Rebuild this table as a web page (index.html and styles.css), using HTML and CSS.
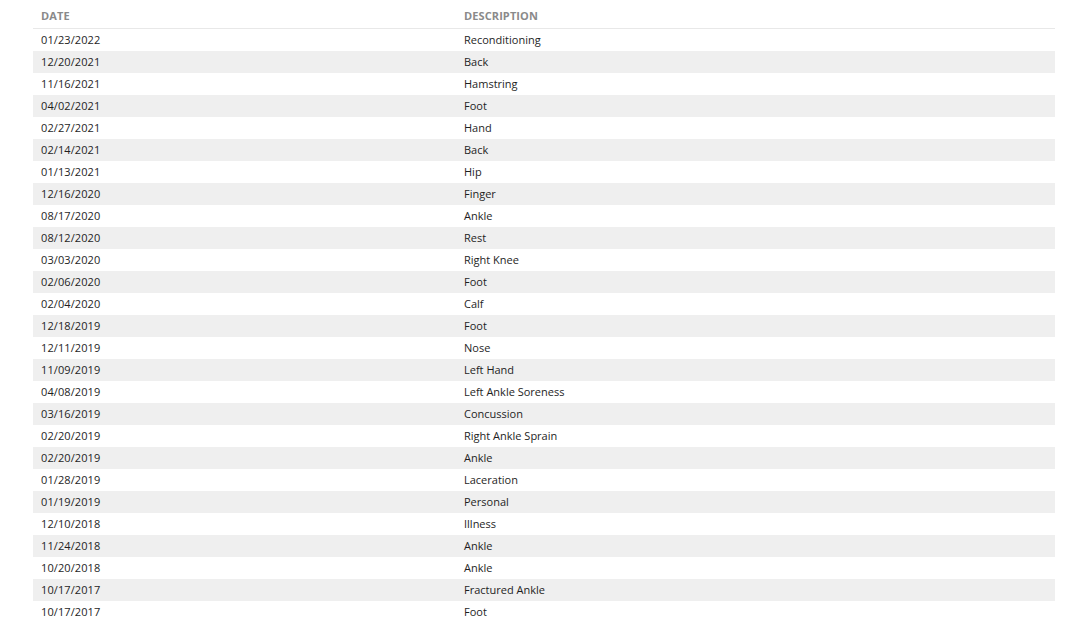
FILE: index.html
```html
<!DOCTYPE html>
<html>
<head>
<meta charset="utf-8">
<link rel="stylesheet" href="styles.css">
</head>
<body>
<div class="wrap">
<table class="log">
<thead>
<tr><th class="c-date">DATE</th><th class="c-desc">DESCRIPTION</th></tr>
</thead>
<tbody>
<tr><td class="d">01/23/2022</td><td>Reconditioning</td></tr>
<tr><td class="d">12/20/2021</td><td>Back</td></tr>
<tr><td class="d">11/16/2021</td><td>Hamstring</td></tr>
<tr><td class="d">04/02/2021</td><td>Foot</td></tr>
<tr><td class="d">02/27/2021</td><td>Hand</td></tr>
<tr><td class="d">02/14/2021</td><td>Back</td></tr>
<tr><td class="d">01/13/2021</td><td>Hip</td></tr>
<tr><td class="d">12/16/2020</td><td>Finger</td></tr>
<tr><td class="d">08/17/2020</td><td>Ankle</td></tr>
<tr><td class="d">08/12/2020</td><td>Rest</td></tr>
<tr><td class="d">03/03/2020</td><td>Right Knee</td></tr>
<tr><td class="d">02/06/2020</td><td>Foot</td></tr>
<tr><td class="d">02/04/2020</td><td>Calf</td></tr>
<tr><td class="d">12/18/2019</td><td>Foot</td></tr>
<tr><td class="d">12/11/2019</td><td>Nose</td></tr>
<tr><td class="d">11/09/2019</td><td>Left Hand</td></tr>
<tr><td class="d">04/08/2019</td><td>Left Ankle Soreness</td></tr>
<tr><td class="d">03/16/2019</td><td>Concussion</td></tr>
<tr><td class="d">02/20/2019</td><td>Right Ankle Sprain</td></tr>
<tr><td class="d">02/20/2019</td><td>Ankle</td></tr>
<tr><td class="d">01/28/2019</td><td>Laceration</td></tr>
<tr><td class="d">01/19/2019</td><td>Personal</td></tr>
<tr><td class="d">12/10/2018</td><td>Illness</td></tr>
<tr><td class="d">11/24/2018</td><td>Ankle</td></tr>
<tr><td class="d">10/20/2018</td><td>Ankle</td></tr>
<tr><td class="d">10/17/2017</td><td>Fractured Ankle</td></tr>
<tr><td class="d">10/17/2017</td><td>Foot</td></tr>
</tbody>
</table>
</div>
</body>
</html>
```
FILE: styles.css
```css
html, body {
  margin: 0;
  padding: 0;
  background: #ffffff;
}
body {
  font-family: "Open Sans", "Liberation Sans", sans-serif;
  color: #1e1e1e;
}
.wrap {
  padding-left: 33px;
  width: 1022px;
}
.log {
  width: 100%;
  border-collapse: collapse;
  table-layout: fixed;
}
.log th {
  height: 28px;
  box-sizing: border-box;
  padding: 9px 8px 0 8px;
  text-align: left;
  vertical-align: top;
  font-size: 11px;
  font-weight: 700;
  letter-spacing: 0.1px;
  color: #8a8a8a;
  border-bottom: 1px solid #e8e8e8;
  line-height: 14px;
}
.log .c-date { width: 423px; }
.log td {
  height: 22px;
  box-sizing: border-box;
  padding: 0 8px;
  font-size: 11px;
  line-height: 22px;
  white-space: nowrap;
}
.log td.d {
  letter-spacing: 0.1px;
}
.log tbody tr:nth-child(even) td {
  background: #efefef;
}
```
